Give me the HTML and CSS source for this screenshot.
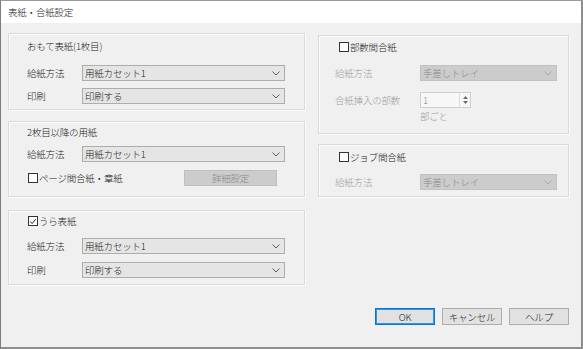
FILE: index.html
```html
<!DOCTYPE html>
<html lang="ja">
<head>
<meta charset="utf-8">
<title>表紙・合紙設定</title>
<link rel="stylesheet" href="styles.css">
</head>
<body>
<div class="window">
  <div class="titlebar">表紙・合紙設定</div>
  <div class="content">
    <div class="columns">
      <div class="col col-left">
        <div class="group g1">
          <div class="gtitle">おもて表紙(1枚目)</div>
          <div class="row r1">
            <span class="label">給紙方法</span>
            <div class="select"><span>用紙カセット1</span><svg class="chev" width="8" height="5" viewBox="0 0 8 5"><polyline points="0.5,0.5 4,4 7.5,0.5" fill="none" stroke="#606060" stroke-width="1"/></svg></div>
          </div>
          <div class="row r2">
            <span class="label">印刷</span>
            <div class="select"><span>印刷する</span><svg class="chev" width="8" height="5" viewBox="0 0 8 5"><polyline points="0.5,0.5 4,4 7.5,0.5" fill="none" stroke="#606060" stroke-width="1"/></svg></div>
          </div>
        </div>
        <div class="group g2">
          <div class="gtitle">2枚目以降の用紙</div>
          <div class="row r1">
            <span class="label">給紙方法</span>
            <div class="select"><span>用紙カセット1</span><svg class="chev" width="8" height="5" viewBox="0 0 8 5"><polyline points="0.5,0.5 4,4 7.5,0.5" fill="none" stroke="#606060" stroke-width="1"/></svg></div>
          </div>
          <div class="row r2 between">
            <label class="check"><span class="box"></span>ページ間合紙・章紙</label>
            <div class="btn disabled detail">詳細設定</div>
          </div>
        </div>
        <div class="group g3">
          <label class="check gcheck"><span class="box"><svg width="9" height="9" viewBox="0 0 9 9"><polyline points="1.5,4.5 3.5,6.8 7.6,1.8" fill="none" stroke="#222" stroke-width="1.1"/></svg></span>うら表紙</label>
          <div class="row r1">
            <span class="label">給紙方法</span>
            <div class="select"><span>用紙カセット1</span><svg class="chev" width="8" height="5" viewBox="0 0 8 5"><polyline points="0.5,0.5 4,4 7.5,0.5" fill="none" stroke="#606060" stroke-width="1"/></svg></div>
          </div>
          <div class="row r2">
            <span class="label">印刷</span>
            <div class="select"><span>印刷する</span><svg class="chev" width="8" height="5" viewBox="0 0 8 5"><polyline points="0.5,0.5 4,4 7.5,0.5" fill="none" stroke="#606060" stroke-width="1"/></svg></div>
          </div>
        </div>
      </div>
      <div class="col col-right">
        <div class="group rg1">
          <label class="check gcheck"><span class="box"></span>部数間合紙</label>
          <div class="row r1">
            <span class="label dim">給紙方法</span>
            <div class="select disabled"><span>手差しトレイ</span><svg class="chev" width="8" height="5" viewBox="0 0 8 5"><polyline points="0.5,0.5 4,4 7.5,0.5" fill="none" stroke="#a8a8a8" stroke-width="1"/></svg></div>
          </div>
          <div class="row r2 spinrow">
            <span class="label dim">合紙挿入の部数</span>
            <div class="spin">
              <span class="spinval">1</span>
              <div class="arrows">
                <svg width="5" height="3" viewBox="0 0 5 3"><polygon points="0,3 2.5,0 5,3" fill="#6a6a6a"/></svg>
                <svg width="5" height="3" viewBox="0 0 5 3"><polygon points="0,0 2.5,3 5,0" fill="#6a6a6a"/></svg>
              </div>
            </div>
          </div>
          <div class="unit dim">部ごと</div>
        </div>
        <div class="group rg2">
          <label class="check gcheck"><span class="box"></span>ジョブ間合紙</label>
          <div class="row r1">
            <span class="label dim">給紙方法</span>
            <div class="select disabled"><span>手差しトレイ</span><svg class="chev" width="8" height="5" viewBox="0 0 8 5"><polyline points="0.5,0.5 4,4 7.5,0.5" fill="none" stroke="#a8a8a8" stroke-width="1"/></svg></div>
          </div>
        </div>
      </div>
    </div>
    <div class="footer">
      <div class="btn default">OK</div>
      <div class="btn">キャンセル</div>
      <div class="btn">ヘルプ</div>
    </div>
  </div>
</div>
</body>
</html>
```

FILE: styles.css
```css
* { box-sizing: border-box; }
html, body { margin: 0; padding: 0; }
body {
  width: 583px;
  height: 349px;
  background: #6e6e6e;
  font-family: "Noto Sans CJK JP", "Noto Sans", sans-serif;
  font-size: 9.5px;
  font-weight: 300;
  letter-spacing: -0.2px;
  color: #1a1a1a;
  overflow: hidden;
}
.window {
  width: 583px;
  height: 349px;
  display: flex;
  flex-direction: column;
  border-left: 1px solid #7d7d7d;
  border-top: 1px solid #9a9a9a;
  border-right: 2px solid #8e8e8e;
  border-bottom: 2px solid #8e8e8e;
  background: #f0f0f0;
}
.titlebar {
  height: 22px;
  line-height: 22px;
  background: #fff;
  padding-left: 7px;
  flex: none;
}
.content {
  flex: 1;
  display: flex;
  flex-direction: column;
  padding: 10px 12px 0 7px;
}
.columns {
  display: flex;
  gap: 13px;
}
.col { display: flex; flex-direction: column; }
.col-left { width: 297px; }
.col-right { width: 251px; }

.group {
  border: 1px solid #dadada;
  box-shadow: inset 1px 1px 0 #fbfbfb, 1px 1px 0 #fbfbfb;
  display: flex;
  flex-direction: column;
  padding-left: 18px;
  padding-right: 19px;
}
.gtitle, .gcheck { line-height: 12px; height: 12px; }
.g1 { height: 77px; padding-top: 6px; }
.g1 .r1 { margin-top: 13px; }
.g1 .r2 { margin-top: 7px; }
.g2 { height: 76px; margin-top: 11px; padding-top: 4px; }
.g2 .r1 { margin-top: 8px; }
.g2 .r2 { margin-top: 8px; }
.g3 { height: 75px; margin-top: 13px; padding-top: 4px; }
.g3 .r1 { margin-top: 11px; }
.g3 .r2 { margin-top: 8px; }

.rg1 { height: 99px; margin-top: 2px; padding-top: 5px; padding-left: 16px; padding-right: 11px; }
.rg1 .r1 { margin-top: 12px; }
.rg1 .r2 { margin-top: 11px; }
.rg2 { height: 53px; margin-top: 10px; padding-top: 6px; padding-left: 16px; padding-right: 11px; }
.rg2 .r1 { margin-top: 11px; }
.col-right .gcheck { margin-left: 4px; }

.row {
  display: flex;
  align-items: center;
  height: 16px;
}
.row.between { justify-content: space-between; }
.label { width: 55px; flex: none; }
.col-right .label { width: 85px; }
.dim { color: #9c9c9c; }

.select {
  flex: 1;
  height: 16px;
  background: #e5e5e5;
  border: 1px solid #adadad;
  display: flex;
  align-items: center;
  justify-content: space-between;
  padding: 0 4px 0 2px;
}
.select.disabled {
  background: #cccccc;
  border-color: #c2c2c2;
  color: #8a8a8a;
}
.chev { display: block; }

.check {
  display: flex;
  align-items: center;
  margin-left: 1px;
}
.box {
  width: 10px;
  height: 10px;
  border: 1px solid #333;
  background: #fff;
  margin-right: 1px;
  display: flex;
  align-items: center;
  justify-content: center;
  flex: none;
}
.box svg { display: block; }

.btn {
  width: 60px;
  height: 17px;
  border: 1px solid #adadad;
  background: #e1e1e1;
  display: flex;
  align-items: center;
  justify-content: center;
}
.btn.default {
  border-color: #0078d7;
  box-shadow: inset 0 0 0 1px #3c93dc;
}
.btn.disabled {
  background: #cccccc;
  border-color: #bfbfbf;
  color: #8a8a8a;
}
.btn.detail { width: 93px; height: 16px; margin-right: 8px; }

.spin {
  width: 51px;
  height: 16px;
  border: 1px solid #cfcfcf;
  background: #f7f7f7;
  display: flex;
}
.spinval { flex: 1; padding-left: 2px; color: #8a8a8a; line-height: 14px; }
.arrows {
  width: 11px;
  border-left: 1px solid #dedede;
  display: flex;
  flex-direction: column;
  justify-content: space-around;
  align-items: center;
  padding: 2px 0;
}
.arrows svg { display: block; }
.unit { margin-left: 85px; margin-top: 2px; line-height: 12px; }

.footer {
  display: flex;
  justify-content: flex-end;
  gap: 7px;
  margin-top: 23px;
}
```
